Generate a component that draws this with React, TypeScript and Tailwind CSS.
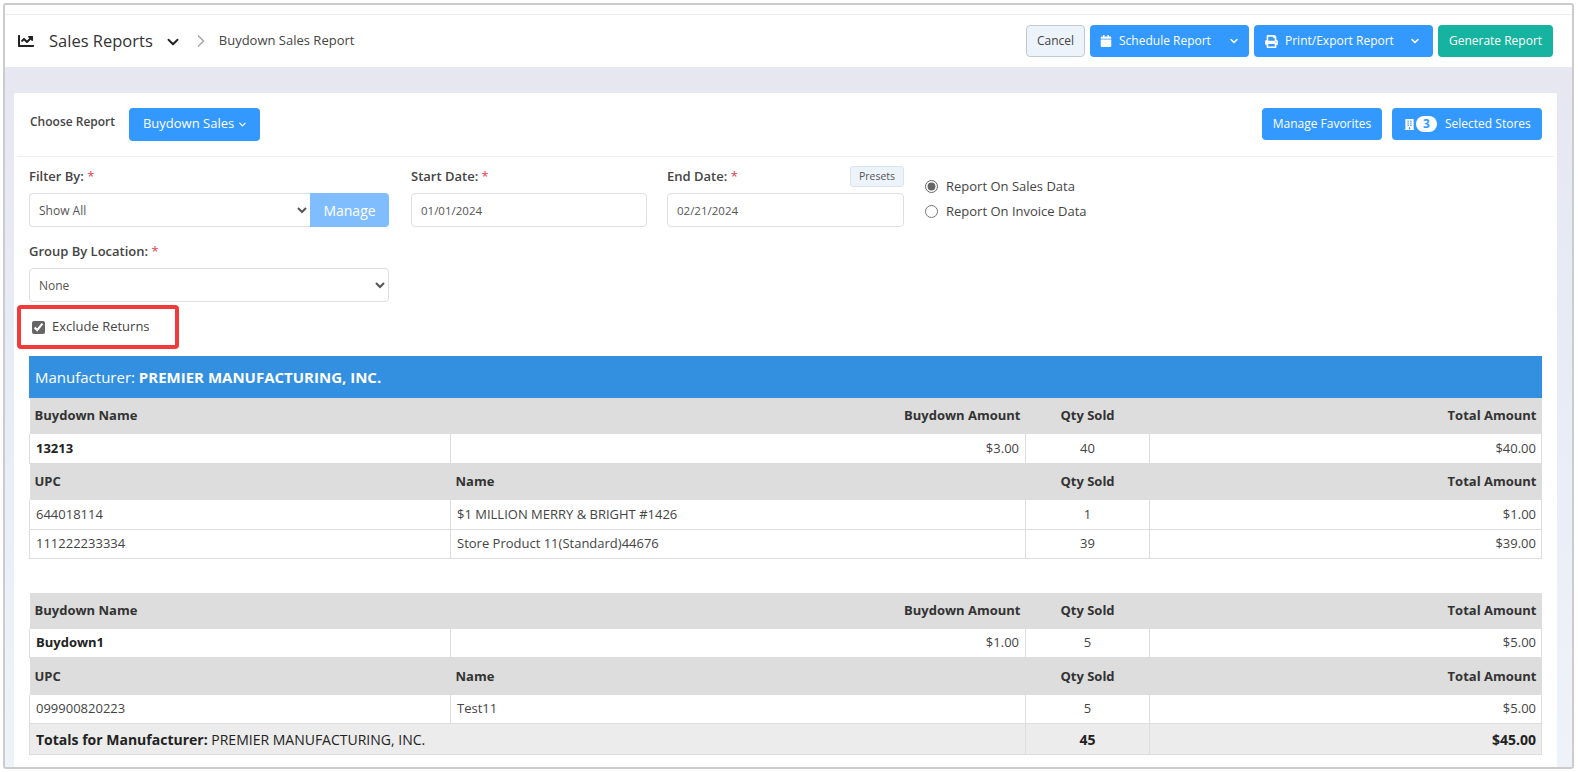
import React from 'react';
import { FaChartLine, FaCalendar, FaPrint, FaBuilding } from 'react-icons/fa';
import { ChevronDown, ChevronRight } from 'lucide-react';

const Req = () => <span className="text-[#e5404f] font-normal"> *</span>;

const blue = 'bg-[#3399ff] text-white rounded-[4px] text-[12px] flex items-center';

const HeadRow = ({ cells }: { cells: string[] }) => (
  <tr className={`bg-[#dddddd] font-bold text-[#333] ${cells[1] === 'Name' ? 'h-[37px]' : 'h-[36px]'}`}>
    <td className="px-[5px]">{cells[0]}</td>
    <td className={cells[1] === 'Name' ? 'px-[5px]' : 'px-[5px] text-right'}>{cells[1]}</td>
    <td className="px-[5px] text-center">{cells[2]}</td>
    <td className="px-[5px] text-right">{cells[3]}</td>
  </tr>
);

const Row = ({ cells, bold }: { cells: string[]; bold?: boolean }) => (
  <tr className="h-[29px] text-[#444] border-b border-[#dddddd]">
    <td className={`px-[6px] border-x border-[#dddddd] ${bold ? 'font-bold text-[#222]' : ''}`}>{cells[0]}</td>
    <td className={`px-[6px] border-r border-[#dddddd] ${bold ? 'text-right' : ''}`}>{cells[1]}</td>
    <td className="px-[6px] border-r border-[#dddddd] text-center">{cells[2]}</td>
    <td className="px-[5px] border-r border-[#dddddd] text-right">{cells[3]}</td>
  </tr>
);

const Cols = () => (
  <colgroup>
    <col className="w-[421px]" />
    <col className="w-[575px]" />
    <col className="w-[124px]" />
    <col />
  </colgroup>
);

export default function App() {
  return (
    <div className="h-[772px] w-[1578px] overflow-hidden bg-white pt-[3px] pl-[3px] font-['Open_Sans',sans-serif] text-[12px] text-[#333]">
      <div className="w-[1571px] h-[766px] border-2 border-[#cccccc] rounded-[3px] overflow-hidden flex flex-col bg-white">
        {/* top bar */}
        <div className="h-[10px] border-b border-[#eeeeee] shrink-0" />
        <header className="h-[52px] shrink-0 flex items-center justify-between pl-[13px] pr-[19px] bg-white">
          <div className="flex items-center">
            <FaChartLine className="text-[16px] text-[#222]" />
            <span className="ml-[15px] text-[16.5px] text-[#333]">Sales Reports</span>
            <ChevronDown className="ml-[11px] mt-[2px] text-[#222]" size={18} strokeWidth={2.5} />
            <ChevronRight className="ml-[9px] text-[#aaa]" size={20} strokeWidth={2} />
            <span className="ml-[8px] text-[13px] text-[#444]">Buydown Sales Report</span>
          </div>
          <div className="flex items-center gap-[5px] h-[32px]">
            <button className="h-full w-[59px] rounded-[4px] border border-[#c3c9d0] bg-[#edf3fa] text-[12px] text-[#444]">Cancel</button>
            <button className={`${blue} h-full w-[159px] pl-[10px]`}>
              <FaCalendar className="text-[12px]" />
              <span className="ml-[7px]">Schedule Report</span>
              <ChevronDown className="ml-[17px]" size={12} strokeWidth={3} />
            </button>
            <button className={`${blue} h-full w-[179px] pl-[11px]`}>
              <FaPrint className="text-[13px]" />
              <span className="ml-[7px]">Print/Export Report</span>
              <ChevronDown className="ml-[15px]" size={12} strokeWidth={3} />
            </button>
            <button className="h-full w-[115px] rounded-[4px] bg-[#16b3a0] text-white text-[12px]">Generate Report</button>
          </div>
        </header>

        {/* content */}
        <div className="flex-1 min-h-0 bg-linear-to-b from-[#e6e7f1] to-[#eef2f9] pt-[26px] pl-[9px] pr-[15px]">
          <div className="bg-white h-full rounded-t-[2px]">
            <div className="h-[64px] mx-[3px] border-b border-[#eeeeee] flex items-center justify-between pl-[13px] pr-[12px]">
              <div className="flex items-center">
                <span className="text-[12px] font-semibold text-[#444] -mt-[6px]">Choose Report</span>
                <button className={`${blue} ml-[14px] h-[33px] w-[131px] justify-center gap-[3px] pl-[2px] text-[13px] -mt-[1px]`}>
                  Buydown Sales <ChevronDown size={11} strokeWidth={2.5} />
                </button>
              </div>
              <div className="flex items-center gap-[10px] -mt-[1px]">
                <button className={`${blue} h-[32px] w-[120px] justify-center`}>Manage Favorites</button>
                <button className={`${blue} h-[32px] w-[150px] pl-[12px]`}>
                  <FaBuilding className="text-[11px]" />
                  <span className="ml-[1px] w-[21px] h-[16px] rounded-full bg-white text-[#3399ff] text-[12px] font-bold flex items-center justify-center">3</span>
                  <span className="ml-[8px]">Selected Stores</span>
                </button>
              </div>
            </div>

            <div className="pl-[15px] pr-[15px]">
              <div className="flex pt-[8px]">
                <div className="w-[360px]">
                  <div className="h-[28px] pt-[2px] font-semibold text-[13px] text-[#444]">Filter By:<Req /></div>
                  <div className="flex h-[34px]">
                    <select className="flex-1 min-w-0 h-full border border-[#dcdfe3] border-r-0 rounded-l-[4px] pl-[5px] text-[12px] text-[#555] bg-white">
                      <option>Show All</option>
                    </select>
                    <button className="w-[79px] h-full rounded-r-[4px] bg-[#80bdff] text-white text-[14px]">Manage</button>
                  </div>
                </div>
                <div className="ml-[22px] w-[236px]">
                  <div className="h-[28px] pt-[2px] font-semibold text-[13px] text-[#444]">Start Date:<Req /></div>
                  <input readOnly value="01/01/2024" className="w-full h-[34px] border border-[#dcdfe3] rounded-[4px] px-[9px] text-[11.5px] text-[#555]" />
                </div>
                <div className="ml-[20px] w-[237px]">
                  <div className="h-[28px] pt-[2px] flex justify-between font-semibold text-[13px] text-[#444]">
                    <span>End Date:<Req /></span>
                    <span className="h-[21px] w-[54px] -mt-[1px] rounded-[3px] border border-[#dbe3ec] bg-[#edf3fa] text-[10.5px] font-normal text-[#555] flex items-center justify-center">Presets</span>
                  </div>
                  <input readOnly value="02/21/2024" className="w-full h-[34px] border border-[#dcdfe3] rounded-[4px] px-[9px] text-[11.5px] text-[#555]" />
                </div>
                <div className="ml-[21px] pt-[13px] text-[13px] text-[#444] flex flex-col gap-[8px]">
                  <label className="flex items-center gap-[8px] h-[17px]">
                    <input type="radio" name="src" defaultChecked className="w-[13px] h-[13px] accent-[#666]" />
                    Report On Sales Data
                  </label>
                  <label className="flex items-center gap-[8px] h-[17px]">
                    <input type="radio" name="src" className="w-[13px] h-[13px] accent-[#666]" />
                    Report On Invoice Data
                  </label>
                </div>
              </div>

              <div className="mt-[14px] w-[360px]">
                <div className="h-[27px] pt-[1px] font-semibold text-[13px] text-[#444]">Group By Location:<Req /></div>
                <select className="w-full h-[34px] border border-[#dcdfe3] rounded-[4px] pl-[5px] text-[12px] text-[#555] bg-white">
                  <option>None</option>
                </select>
              </div>

              <div className="mt-[3px] -ml-[12px] w-[162px] h-[44px] border-[4px] border-[#f33a3a] rounded-[4px] flex items-center pl-[11px] text-[13px] text-[#444]">
                <input type="checkbox" defaultChecked className="w-[13px] h-[13px] accent-[#666]" />
                <span className="ml-[7px]">Exclude Returns</span>
              </div>

              {/* report */}
              <div className="mt-[7px] w-[1513px] text-[13px]">
                <div className="h-[42px] bg-[#3390e0] text-white text-[15px] flex items-center pl-[6px]">
                  Manufacturer:&nbsp;<b>PREMIER MANUFACTURING, INC.</b>
                </div>
                <table className="w-full table-fixed border-collapse">
                  <Cols />
                  <tbody>
                    <HeadRow cells={['Buydown Name', 'Buydown Amount', 'Qty Sold', 'Total Amount']} />
                    <Row bold cells={['13213', '$3.00', '40', '$40.00']} />
                    <HeadRow cells={['UPC', 'Name', 'Qty Sold', 'Total Amount']} />
                    <Row cells={['644018114', '$1 MILLION MERRY & BRIGHT #1426', '1', '$1.00']} />
                    <Row cells={['111222233334', 'Store Product 11(Standard)44676', '39', '$39.00']} />
                  </tbody>
                </table>
                <table className="w-full table-fixed border-collapse mt-[34px]">
                  <Cols />
                  <tbody>
                    <HeadRow cells={['Buydown Name', 'Buydown Amount', 'Qty Sold', 'Total Amount']} />
                    <Row bold cells={['Buydown1', '$1.00', '5', '$5.00']} />
                    <HeadRow cells={['UPC', 'Name', 'Qty Sold', 'Total Amount']} />
                    <Row cells={['099900820223', 'Test11', '5', '$5.00']} />
                    <tr className="h-[31px] bg-[#ececec] text-[14px] text-[#222] border-b border-[#dddddd]">
                      <td colSpan={2} className="px-[6px] border-l border-[#dddddd]">
                        <b>Totals for Manufacturer:</b> PREMIER MANUFACTURING, INC.
                      </td>
                      <td className="text-center font-bold border-x border-[#dddddd]">45</td>
                      <td className="px-[5px] text-right font-bold border-r border-[#dddddd]">$45.00</td>
                    </tr>
                  </tbody>
                </table>
              </div>
            </div>
          </div>
        </div>
      </div>
    </div>
  );
}
